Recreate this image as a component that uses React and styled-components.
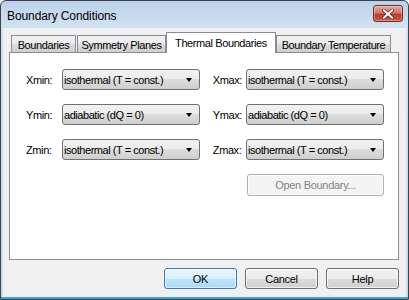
import React from 'react'
import styled, {createGlobalStyle} from 'styled-components'

const Global = createGlobalStyle`
  html, body { margin: 0; padding: 0; background: #fff; }
  body { font-family: "Liberation Sans", Arial, sans-serif; font-size: 11px; color: #000; }
`

const Window = styled.div`
  width: 409px;
  height: 300px;
  box-sizing: border-box;
  border: 1px solid #3d434a;
  border-radius: 6px 6px 0 0;
  background: linear-gradient(#bcd2ea, #d3e2f2 28px, #c6daef);
  padding: 0 2px 2px;
  display: flex;
  flex-direction: column;
  box-shadow: inset 0 -2px 0 #3aa6d8;
`

const TitleBar = styled.div`
  height: 27px;
  display: flex;
  justify-content: space-between;
  align-items: center;
  padding-left: 4px;
`

const Title = styled.span`
  font-size: 12px;
  letter-spacing: -0.1px;
  margin-top: 2px;
`

const CloseButton = styled.div`
  align-self: flex-start;
  margin-top: 4px;
  margin-right: 3px;
  width: 30px;
  height: 17px;
  box-sizing: border-box;
  border: 1px solid #6e2b25;
  border-radius: 3px;
  background: linear-gradient(#e4a99f, #d0766a 45%, #bf3b30 55%, #c9573f);
  display: flex;
  align-items: center;
  justify-content: center;
  box-shadow: inset 0 0 0 1px rgba(255,255,255,0.35);
`

const Client = styled.div`
  flex: 1;
  background: #f0f0f0;
  display: flex;
  flex-direction: column;
  padding: 4px 7px 8px 6px;
`

const TabStrip = styled.div`
  height: 20px;
  display: flex;
  align-items: flex-end;
  padding-left: 2px;
  position: relative;
  z-index: 1;
`

const Tab = styled.div`
  width: ${p => p.$w}px;
  margin-left: ${p => p.$ml || 0}px;
  height: ${p => (p.$active ? 21 : 17)}px;
  margin-bottom: ${p => (p.$active ? -1 : 0)}px;
  box-sizing: border-box;
  border: 1px solid #898c95;
  border-bottom: none;
  background: ${p => (p.$active ? '#fff' : 'linear-gradient(#f2f2f2, #ebebeb 50%, #dddddd 50%, #cfcfcf)')};
  display: flex;
  align-items: center;
  justify-content: center;
  letter-spacing: -0.4px;
  white-space: nowrap;
  padding-top: ${p => (p.$active ? 0 : 1)}px;
`

const Panel = styled.div`
  height: 208px;
  box-sizing: border-box;
  border: 1px solid #898c95;
  background: #fff;
  padding: 16px 0 0 16px;
`

const Grid = styled.div`
  width: 358px;
  display: grid;
  grid-template-columns: 36px 138px 1fr auto 138px;
  row-gap: 14px;
  align-items: center;
`

const Label = styled.span`
  grid-column: ${p => p.$col};
  padding-right: ${p => p.$pr || 0}px;
  letter-spacing: -0.4px;
`

const Select = styled.div`
  grid-column: ${p => p.$col};
  height: 21px;
  box-sizing: border-box;
  border: 1px solid #707070;
  border-radius: 3px;
  background: linear-gradient(#f2f2f2, #ebebeb 50%, #dddddd 50%, #cfcfcf);
  display: flex;
  align-items: center;
  justify-content: space-between;
  padding: 0 7px 0 1px;
  letter-spacing: -0.45px;
  white-space: nowrap;
`

const Arrow = styled.span`
  width: 0;
  height: 0;
  border-left: 3.5px solid transparent;
  border-right: 3.5px solid transparent;
  border-top: 4px solid #000;
`

const Button = styled.div`
  grid-column: ${p => p.$col || 'auto'};
  margin-left: ${p => p.$ml || 0}px;
  width: ${p => p.$w || 73}px;
  height: ${p => p.$h || 21}px;
  box-sizing: border-box;
  border: 1px solid ${p => (p.$default ? '#3c7fb1' : p.$disabled ? '#adb2b5' : '#707070')};
  border-radius: 3px;
  background: ${p =>
    p.$default
      ? 'linear-gradient(#eaf6fd, #d9f0fc 50%, #bee6fd 50%, #a7d9f5)'
      : p.$disabled
      ? '#f4f4f4'
      : 'linear-gradient(#f2f2f2, #ebebeb 50%, #dddddd 50%, #cfcfcf)'};
  color: ${p => (p.$disabled ? '#838383' : '#000')};
  display: flex;
  align-items: center;
  justify-content: center;
  letter-spacing: -0.3px;
  box-shadow: ${p => (p.$default ? 'inset 0 0 0 1px rgba(255,255,255,0.6)' : 'inset 0 0 0 1px rgba(255,255,255,0.7)')};
`

const Footer = styled.div`
  display: flex;
  justify-content: flex-end;
  gap: 8px;
  margin-top: 8px;
`

const rows = [
  ['Xmin:', 'isothermal (T = const.)', 'Xmax:', 'isothermal (T = const.)'],
  ['Ymin:', 'adiabatic (dQ = 0)', 'Ymax:', 'adiabatic (dQ = 0)'],
  ['Zmin:', 'isothermal (T = const.)', 'Zmax:', 'isothermal (T = const.)'],
]

const tabs = [
  {name: 'Boundaries', w: 65},
  {name: 'Symmetry Planes', w: 89, ml: 1},
  {name: 'Thermal Boundaries', w: 110, active: true},
  {name: 'Boundary Temperature', w: 115},
]

const App = () => (
  <>
    <Global />
    <Window>
      <TitleBar>
        <Title>Boundary Conditions</Title>
        <CloseButton>
          <svg width="12" height="10" viewBox="0 0 12 10">
            <path d="M2 1.5 L10 8.5 M10 1.5 L2 8.5" stroke="#5a1d17" strokeWidth="3.4" strokeLinecap="square" />
            <path d="M2 1.5 L10 8.5 M10 1.5 L2 8.5" stroke="#fff" strokeWidth="2" strokeLinecap="square" />
          </svg>
        </CloseButton>
      </TitleBar>
      <Client>
        <TabStrip>
          {tabs.map(t => (
            <Tab key={t.name} $w={t.w} $ml={t.ml} $active={t.active}>{t.name}</Tab>
          ))}
        </TabStrip>
        <Panel>
          <Grid>
            {rows.map(([l1, v1, l2, v2]) => (
              <React.Fragment key={l1}>
                <Label $col={1}>{l1}</Label>
                <Select $col={2}>{v1}<Arrow /></Select>
                <Label $col={4} $pr={4}>{l2}</Label>
                <Select $col={5}>{v2}<Arrow /></Select>
              </React.Fragment>
            ))}
            <Button $col={5} $ml={1} $w={137} $h={22} $disabled>Open Boundary...</Button>
          </Grid>
        </Panel>
        <Footer>
          <Button $default>OK</Button>
          <Button>Cancel</Button>
          <Button>Help</Button>
        </Footer>
      </Client>
    </Window>
  </>
)

export default App
